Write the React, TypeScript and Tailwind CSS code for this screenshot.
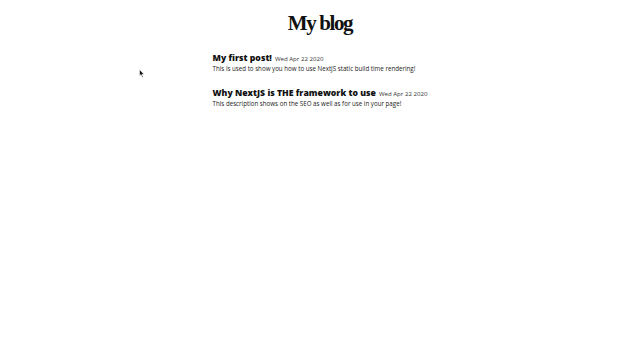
import React from 'react';

const posts = [
  {
    slug: 'my-first-post',
    title: 'My first post!',
    date: 'Wed Apr 22 2020',
    description: 'This is used to show you how to use NextJS static build time rendering!',
  },
  {
    slug: 'why-nextjs',
    title: 'Why NextJS is THE framework to use',
    date: 'Wed Apr 22 2020',
    description: 'This description shows on the SEO as well as for use in your page!',
  },
];

const App: React.FC = () => {
  return (
    <div className="relative min-h-screen w-full bg-white text-[#111]">
      <h1 className="pt-[10px] text-center font-['Liberation_Serif',serif] text-[21px] font-bold leading-[27px] tracking-[-1.4px]">
        My blog
      </h1>

      <div className="mt-[15px] flex justify-center">
        <div className="flex flex-col gap-[13px] font-['Open_Sans','Liberation_Sans',sans-serif]">
          {posts.map((post) => (
            <div key={post.slug}>
              <div className="flex items-baseline gap-[3px]">
                <span className="text-[8.7px] font-extrabold leading-[12px]">{post.title}</span>
                <span className="text-[6.1px] leading-[10px] text-[#333]">{post.date}</span>
              </div>
              <p className="text-[6.2px] leading-[10px] text-[#222]">{post.description}</p>
            </div>
          ))}
        </div>
      </div>

      {/* mouse pointer */}
      <svg className="absolute left-[139px] top-[69px]" width="6" height="9" viewBox="0 0 6 9">
        <path d="M0.5 0.5 L0.5 7 L2 5.6 L3.2 8.3 L4.2 7.9 L3 5.3 L5 5.3 Z" fill="#111" stroke="#fff" strokeWidth="0.6" />
      </svg>
    </div>
  );
};

export default App;
